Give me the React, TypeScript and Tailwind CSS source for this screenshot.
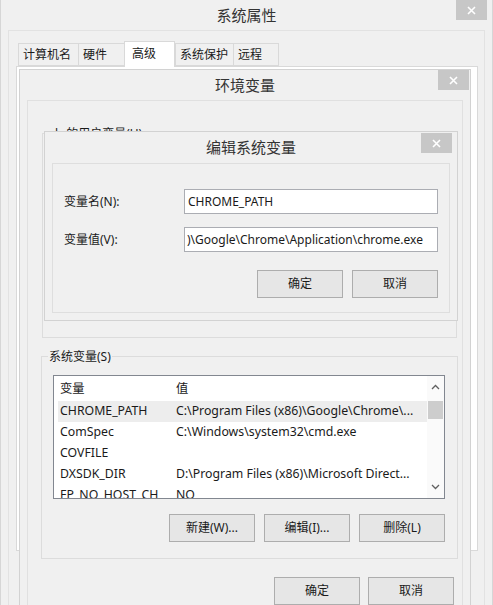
const tabs = [
  { label: "计算机名", w: "w-[60px]" },
  { label: "硬件", w: "w-[46px]" },
  { label: "高级", w: "w-[51px]", active: true },
  { label: "系统保护", w: "w-[58px]" },
  { label: "远程", w: "w-[46px]" },
];

const rows = [
  { name: "CHROME_PATH", value: "C:\\Program Files (x86)\\Google\\Chrome\\...", selected: true },
  { name: "ComSpec", value: "C:\\Windows\\system32\\cmd.exe" },
  { name: "COVFILE", value: "" },
  { name: "DXSDK_DIR", value: "D:\\Program Files (x86)\\Microsoft Direct..." },
  { name: "FP_NO_HOST_CH", value: "NO" },
];

function CloseButton() {
  return (
    <div className="w-[31px] h-[20px] bg-[#c7c7c7] flex items-center justify-center">
      <svg width="9" height="9" viewBox="0 0 9 9">
        <path d="M1 1 L8 8 M8 1 L1 8" stroke="#fff" strokeWidth="1.6" />
      </svg>
    </div>
  );
}

function Button({ children }: { children: React.ReactNode }) {
  return (
    <div className="w-[86px] h-[28px] border border-[#adadad] bg-[#e6e6e6] flex items-center justify-center text-[12px] text-[#1a1a1a]">
      {children}
    </div>
  );
}

export default function App() {
  return (
    <div className="relative w-[493px] h-[605px] overflow-hidden bg-[#f0f0f0] font-['Noto_Sans','Noto_Sans_CJK_SC',sans-serif] text-[#1a1a1a]">
      {/* 系统属性 */}
      <div className="absolute left-0 top-0 w-[493px] h-[640px] border-x border-[#d6d6d6] bg-[#f0f0f0]">
        <div className="h-[30px] flex items-center justify-center text-[15px] text-[#333]">系统属性</div>
        <div className="absolute left-[455px] top-0">
          <CloseButton />
        </div>
        <div className="absolute left-[7px] top-[30px] w-[477px] h-[610px] border border-[#e2e2e2] bg-[#f0f0f0] pl-[7px] pt-[9px]">
          <div className="flex items-end h-[26px] ml-[2px]">
            {tabs.map((t) =>
              t.active ? (
                <div
                  key={t.label}
                  className={`${t.w} h-[26px] -mb-[1px] bg-white border border-b-0 border-[#d9d9d9] relative z-10 pl-[7px] pt-[3px] text-[12px]`}
                >
                  {t.label}
                </div>
              ) : (
                <div
                  key={t.label}
                  className={`${t.w} h-[23px] bg-[#f0f0f0] border border-r-0 last:border-r border-[#d9d9d9] flex items-center pl-[4px] text-[12px]`}
                >
                  {t.label}
                </div>
              )
            )}
          </div>
          <div className="w-[462px] h-[485px] bg-white border border-[#d9d9d9]" />
        </div>
      </div>

      {/* 环境变量 */}
      <div className="absolute left-[19px] top-[69px] w-[452px] h-[580px] border border-[#d2d2d2] bg-[#f0f0f0]">
        <div className="h-[30px] flex items-center justify-center text-[15px] text-[#333]">环境变量</div>
        <div className="absolute left-[418px] top-0">
          <CloseButton />
        </div>
        <div className="absolute left-[7px] top-[30px] w-[436px] h-[560px] border border-[#e0e0e0] bg-[#f0f0f0] px-[13px] pt-[24px]">
          <fieldset className="h-[213px] border border-[#dcdcdc] ml-[1px] w-[415px]">
            <legend className="ml-[9px] px-[3px] text-[12px] leading-[17px]">lr 的用户变量(U)</legend>
          </fieldset>

          <fieldset className="mt-[10px] w-[416px] border border-[#dcdcdc] pr-[12px] pt-[10px] pb-[16px]">
            <legend className="ml-[6px] px-[1px] text-[12px] leading-[17px]">系统变量(S)</legend>
            <div className="ml-[11px] w-[392px] h-[124px] border border-[#828790] bg-white flex overflow-hidden">
              <div className="w-[373px] text-[12.3px]">
                <div className="h-[25px] flex items-center pl-[6px] pt-[1px]">
                  <div className="w-[116px]">变量</div>
                  <div>值</div>
                </div>
                {rows.map((r) => (
                  <div
                    key={r.name}
                    className={`h-[21px] ml-[4px] pl-[2px] flex items-center whitespace-nowrap ${r.selected ? "bg-[#ededed]" : ""}`}
                  >
                    <div className="w-[116px]">{r.name}</div>
                    <div>{r.value}</div>
                  </div>
                ))}
              </div>
              <div className="w-[17px] bg-[#fafafa] flex flex-col items-center">
                <div className="h-[22px] flex items-center justify-center">
                  <svg width="9" height="6" viewBox="0 0 9 6">
                    <path d="M1 5 L4.5 1.5 L8 5" stroke="#606060" strokeWidth="1.3" fill="none" />
                  </svg>
                </div>
                <div className="mt-[3px] w-[15px] h-[18px] bg-[#cdcdcd]" />
                <div className="flex-1" />
                <div className="h-[22px] flex items-center justify-center">
                  <svg width="9" height="6" viewBox="0 0 9 6">
                    <path d="M1 1 L4.5 4.5 L8 1" stroke="#606060" strokeWidth="1.3" fill="none" />
                  </svg>
                </div>
              </div>
            </div>
            <div className="mt-[15px] flex justify-end gap-[9px]">
              <Button>新建(W)...</Button>
              <Button>编辑(I)...</Button>
              <Button>删除(L)</Button>
            </div>
          </fieldset>

          <div className="mt-[18px] flex justify-end gap-[8px] mr-[-5px]">
            <Button>确定</Button>
            <Button>取消</Button>
          </div>
        </div>
      </div>

      {/* 编辑系统变量 */}
      <div className="absolute left-[44px] top-[131px] w-[414px] h-[190px] border border-[#d2d2d2] bg-[#f0f0f0]">
        <div className="h-[31px] flex items-center justify-center text-[15px] text-[#333]">编辑系统变量</div>
        <div className="absolute left-[376px] top-[1px]">
          <CloseButton />
        </div>
        <div className="absolute left-[7px] top-[31px] w-[398px] h-[150px] border border-[#dedede] bg-[#f0f0f0] pl-[11px] pr-[11px] pt-[25px] text-[12px]">
          <div className="flex items-center">
            <div className="w-[120px]">变量名(N):</div>
            <div className="w-[254px] h-[25px] border border-[#abadb3] bg-white flex items-center pl-[3px]">CHROME_PATH</div>
          </div>
          <div className="flex items-center mt-[13px]">
            <div className="w-[120px]">变量值(V):</div>
            <div className="w-[254px] h-[25px] border border-[#abadb3] bg-white flex items-center pl-[2px] overflow-hidden whitespace-nowrap">
              )\Google\Chrome\Application\chrome.exe
            </div>
          </div>
          <div className="mt-[18px] flex justify-end gap-[9px]">
            <Button>确定</Button>
            <Button>取消</Button>
          </div>
        </div>
      </div>
    </div>
  );
}
